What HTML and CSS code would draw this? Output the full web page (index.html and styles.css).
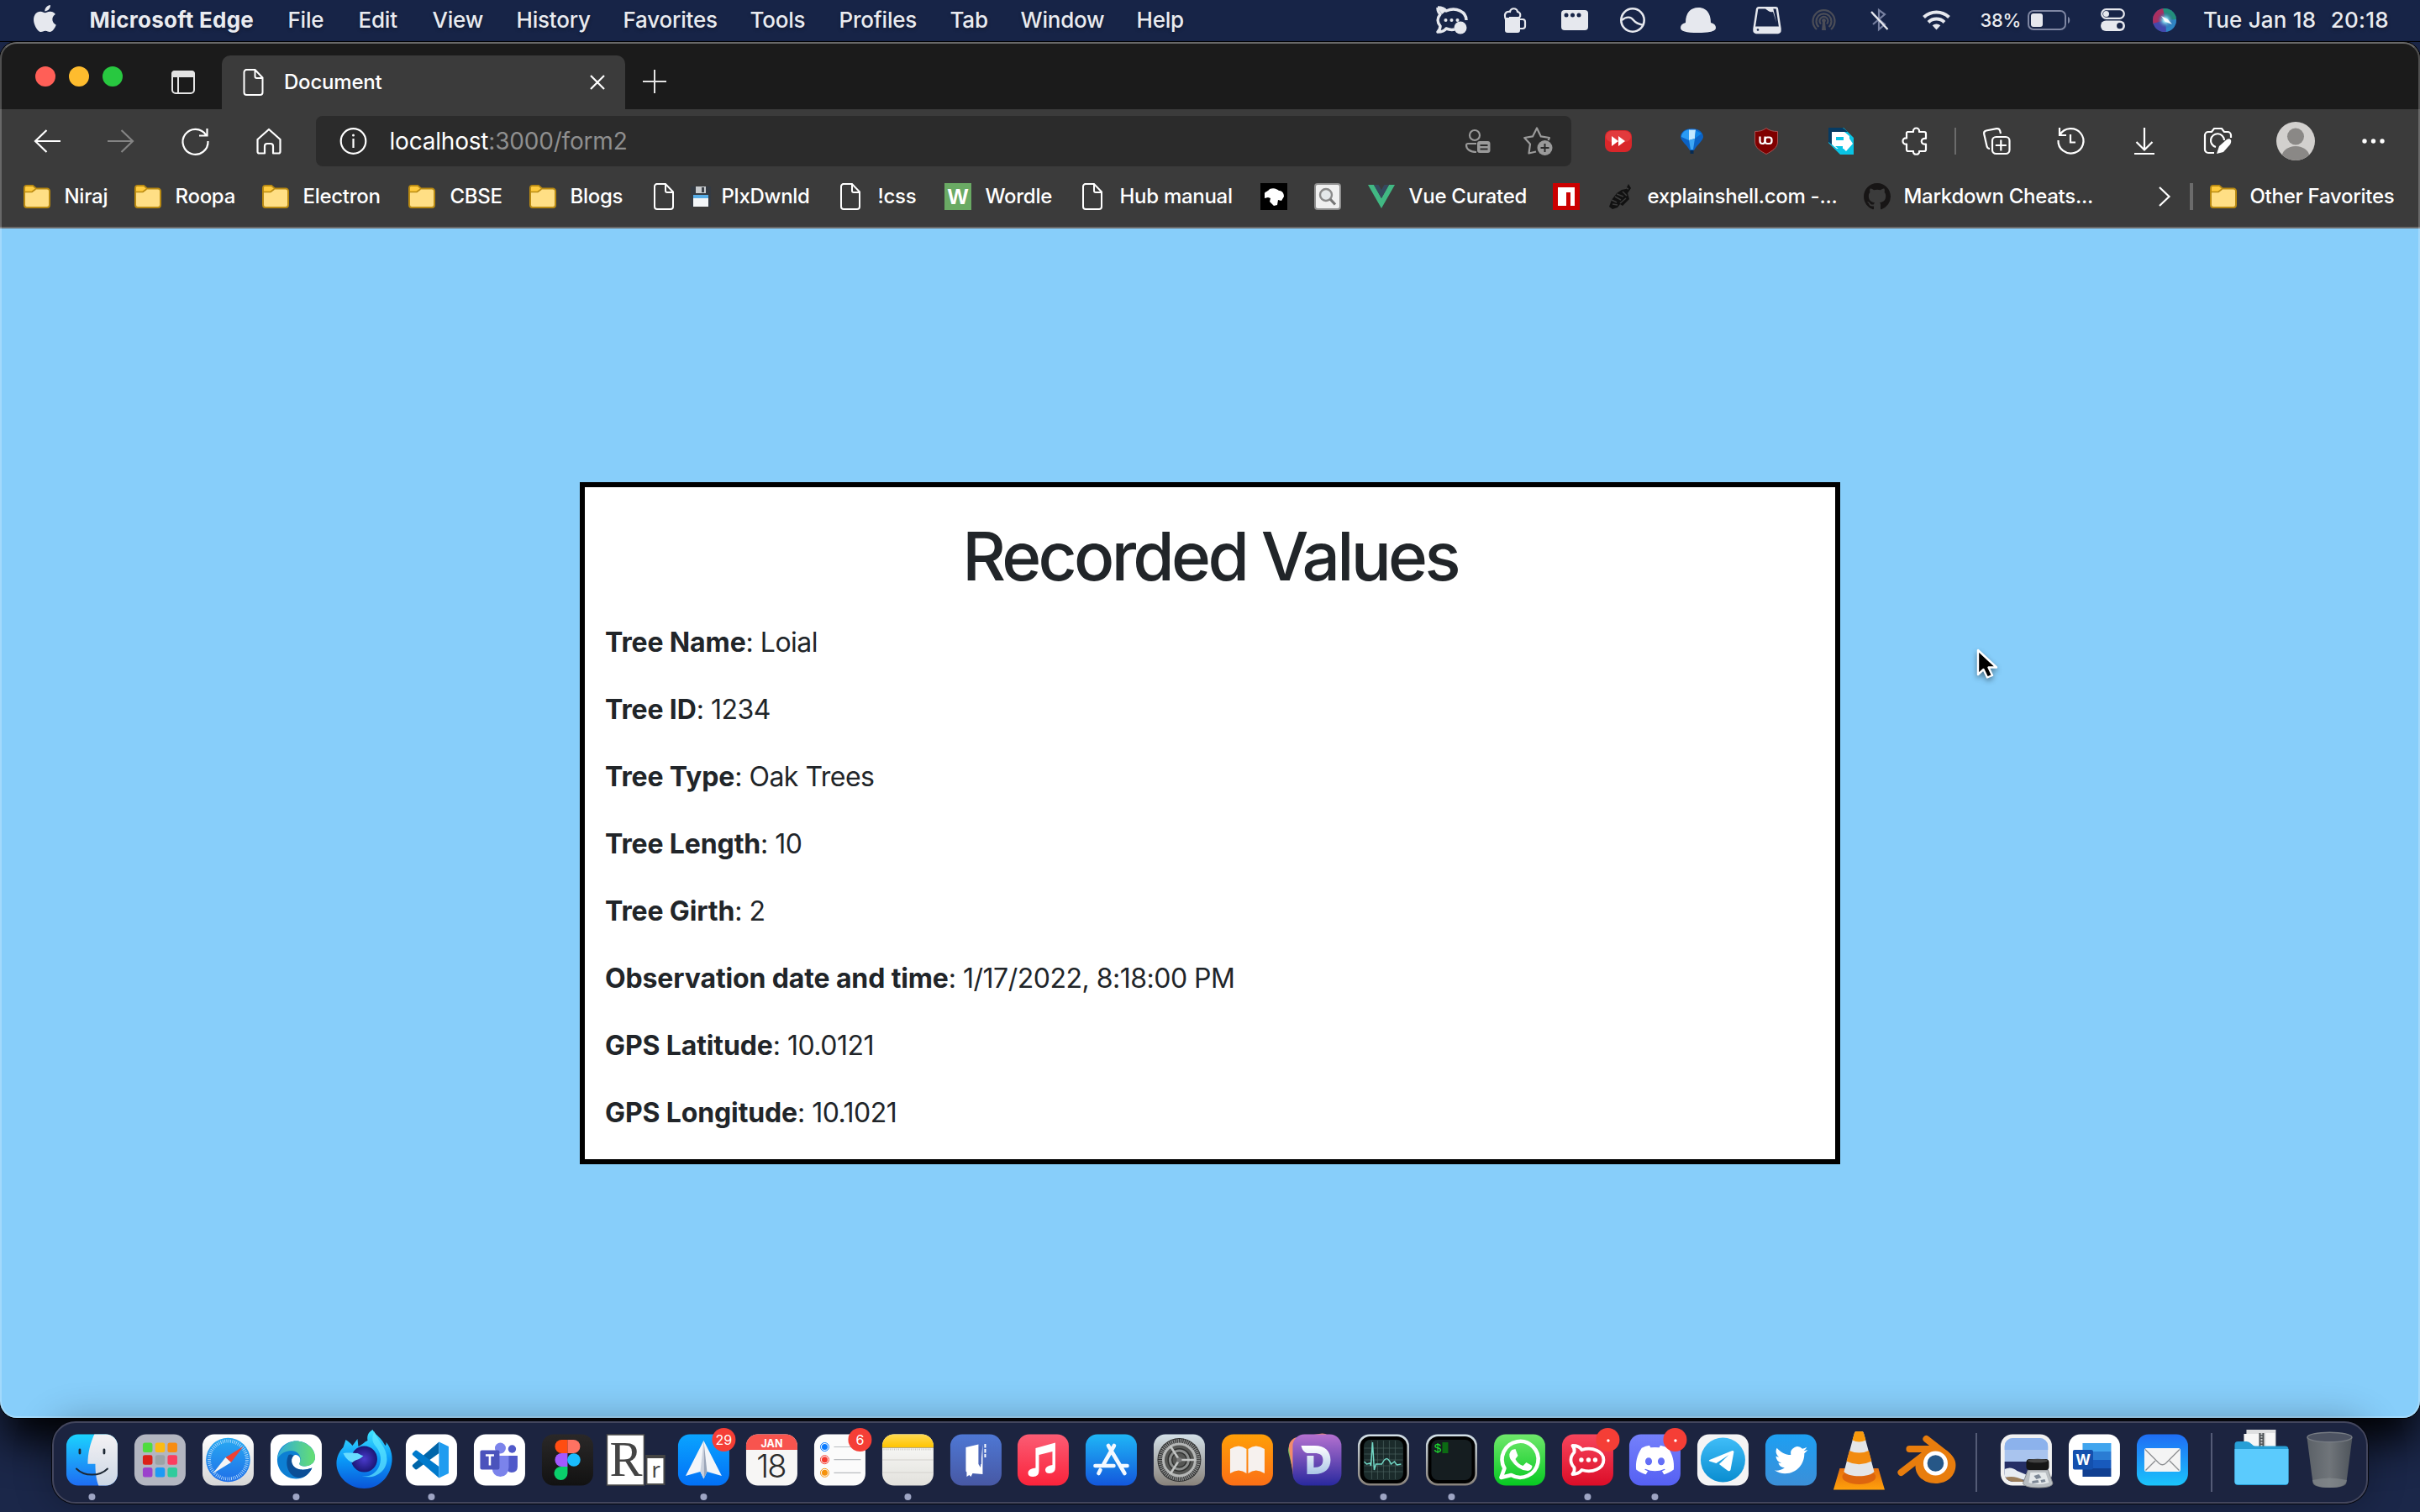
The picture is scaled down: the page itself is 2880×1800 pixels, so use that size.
FILE: index.html
```html
<!DOCTYPE html>
<html lang="en">
<head>
<meta charset="utf-8">
<title>Document</title>
<link rel="stylesheet" href="styles.css">
</head>
<body>
<svg class="defs" width="0" height="0">
  <defs>
    <symbol id="folder" viewBox="0 0 32 28"><path d="M1 4a3 3 0 0 1 3-3h7l4 3.500h13a3 3 0 0 1 3 3V24a3 3 0 0 1-3 3H4a3 3 0 0 1-3-3z" fill="#ffdf85" stroke="#b98a12" stroke-width="2"/><path d="M2 4a2 2 0 0 1 2-2h6.700l3 3-3 3H2z" fill="#ffcb3d"/><path d="M1.500 8.500H10L14.500 5" fill="none" stroke="#b98a12" stroke-width="1.600"/></symbol>
    <symbol id="page" viewBox="0 0 24 32"><path d="M4.500 1H14l9 9.500V28a3 3 0 0 1-3 3H4a3 3 0 0 1-3-3V4a3 3 0 0 1 3.500-3zM14 1v8a2 2 0 0 0 2 2h7" fill="none" stroke="#fff" stroke-width="2"/></symbol>
    <linearGradient id="gFinder" x2="0" y2="1"><stop stop-color="#1bd3fe"/><stop offset="1" stop-color="#1e6cf3"/></linearGradient>
    <linearGradient id="gLight" x2="0" y2="1"><stop stop-color="#fff"/><stop offset="1" stop-color="#d6d6d6"/></linearGradient>
    <linearGradient id="gFace" x2="0" y2="1"><stop stop-color="#f4f2f4"/><stop offset="1" stop-color="#ccd7e5"/></linearGradient>
    <linearGradient id="gSky" x2="0" y2="1"><stop stop-color="#28aaf2"/><stop offset="1" stop-color="#1f6fe8"/></linearGradient>
    <linearGradient id="gEdge" x2="1" y2="0"><stop stop-color="#2fa9dc"/><stop offset="1" stop-color="#66e070"/></linearGradient>
    <linearGradient id="gFox" x2="0" y2="1"><stop stop-color="#3fe6ff"/><stop offset=".5" stop-color="#0a9af8"/><stop offset="1" stop-color="#0a55d8"/></linearGradient>
    <linearGradient id="gDark" x2="0" y2="1"><stop stop-color="#2a2828"/><stop offset="1" stop-color="#121212"/></linearGradient>
    <linearGradient id="gSpark" x2="0" y2="1"><stop stop-color="#0aa4ff"/><stop offset="1" stop-color="#0270f6"/></linearGradient>
    <linearGradient id="gNotes" x2="0" y2="1"><stop stop-color="#ffdb55"/><stop offset="1" stop-color="#ffc400"/></linearGradient>
    <linearGradient id="gPaper" x2="0" y2="1"><stop stop-color="#fdfdfc"/><stop offset="1" stop-color="#e2e1dc"/></linearGradient>
    <linearGradient id="gBook" x2="0" y2="1"><stop stop-color="#4e77d4"/><stop offset="1" stop-color="#4758a4"/></linearGradient>
    <linearGradient id="gMusic" x2="0" y2="1"><stop stop-color="#fb5c74"/><stop offset="1" stop-color="#fa233b"/></linearGradient>
    <linearGradient id="gStore" x2="0" y2="1"><stop stop-color="#1fb6f6"/><stop offset="1" stop-color="#1357dc"/></linearGradient>
    <linearGradient id="gMetal" x2="0" y2="1"><stop stop-color="#d3e0e8"/><stop offset="1" stop-color="#88827b"/></linearGradient>
    <linearGradient id="gOrange" x2="0" y2="1"><stop stop-color="#ff9f07"/><stop offset="1" stop-color="#fb6f16"/></linearGradient>
    <linearGradient id="gDash" x2="0" y2="1"><stop stop-color="#b571d0"/><stop offset="1" stop-color="#29299e"/></linearGradient>
    <linearGradient id="gDee" x2="0" y2="1"><stop stop-color="#fff"/><stop offset="1" stop-color="#aac6e6"/></linearGradient>
    <linearGradient id="gGreen" x2="0" y2="1"><stop stop-color="#6fe86b"/><stop offset="1" stop-color="#07c922"/></linearGradient>
    <linearGradient id="gRed" x2="0" y2="1"><stop stop-color="#f7455c"/><stop offset="1" stop-color="#db0d28"/></linearGradient>
    <linearGradient id="gBlurple" x2="0" y2="1"><stop stop-color="#7480fb"/><stop offset="1" stop-color="#5560f3"/></linearGradient>
    <linearGradient id="gTele" x2="0" y2="1"><stop stop-color="#3fbdf8"/><stop offset="1" stop-color="#0a8dd0"/></linearGradient>
    <linearGradient id="gBird" x2="0" y2="1"><stop stop-color="#1d9ff2"/><stop offset="1" stop-color="#3b8fd8"/></linearGradient>
    <linearGradient id="gMail" x2="0" y2="1"><stop stop-color="#1f6df5"/><stop offset="1" stop-color="#1bc4fb"/></linearGradient>
    <linearGradient id="gTrash"><stop stop-color="#5b6167"/><stop offset=".5" stop-color="#70757a"/><stop offset="1" stop-color="#4e545b"/></linearGradient>
    <linearGradient id="gBase" x2="0" y2="1"><stop stop-color="#e8700e"/><stop offset="1" stop-color="#ffa10b"/></linearGradient>
    <radialGradient id="gSiri"><stop stop-color="#fff"/><stop offset=".3" stop-color="#7fd0e8"/><stop offset="1" stop-color="#2b4a9c" stop-opacity="0"/></radialGradient>
    <radialGradient id="gOrb"><stop stop-color="#4a3acb"/><stop offset="1" stop-color="#1b1675"/></radialGradient>
  </defs>
</svg>

<header class="menubar">
  <svg class="lift apple" width="26" height="32" viewBox="2.200 0 19 24" preserveAspectRatio="none"><path fill="#e6e8ee" d="M12.152 6.896c-.948 0-2.415-1.078-3.960-1.040-2.040.027-3.910 1.183-4.961 3.014-2.117 3.675-.546 9.103 1.519 12.090 1.013 1.454 2.208 3.090 3.792 3.039 1.520-.065 2.090-.987 3.935-.987 1.831 0 2.350.987 3.960.948 1.637-.026 2.676-1.480 3.676-2.948 1.156-1.688 1.636-3.325 1.662-3.415-.039-.013-3.182-1.221-3.220-4.857-.026-3.040 2.480-4.494 2.597-4.559-1.429-2.090-3.623-2.324-4.390-2.376-2-.156-3.675 1.090-4.610 1.090zM15.530 3.830c.843-1.012 1.400-2.427 1.245-3.830-1.207.052-2.662.805-3.532 1.818-.78.896-1.454 2.338-1.273 3.714 1.338.104 2.715-.688 3.559-1.701"/></svg>
  <span class="app-name">Microsoft Edge</span>
  <span>File</span><span>Edit</span><span>View</span><span>History</span><span>Favorites</span><span>Tools</span><span>Profiles</span><span>Tab</span><span>Window</span><span>Help</span>
  <svg width="38" height="34" viewBox="0 0 38 34"><path d="M2 2c4 0 8 1 10 4 12-5 24 1 24 11M2 2c0 4 1 6 3 8-4 5-4 9 0 14 0 3-1 5-3 7 4 0 8-1 10-4 4 1.500 8 1.500 10 1" fill="none" stroke="#e6e8ee" stroke-width="3.500" stroke-linejoin="round"/><path d="M2 2c4 0 8 1 10 4l-5 4z" fill="#e6e8ee"/><circle cx="11.500" cy="17" r="2" fill="#e6e8ee"/><circle cx="18.500" cy="17" r="2" fill="#e6e8ee"/><circle cx="25.500" cy="17" r="2" fill="#e6e8ee"/><circle cx="29" cy="26" r="7.500" fill="#e6e8ee"/></svg>
  <svg width="26" height="30" viewBox="0 0 26 30"><path d="M1 12h18v15a3 3 0 0 1-3 3H4a3 3 0 0 1-3-3z" fill="#e6e8ee"/><path d="M19 14h3a3 3 0 0 1 3 3v5a3 3 0 0 1-3 3h-3M2 14C-1 7 3 4 7 5c1-5 8-5 9 0 4 1 4 5 2 7H6" fill="none" stroke="#e6e8ee" stroke-width="2.200"/></svg>
  <svg width="32" height="24" viewBox="0 0 32 24"><rect width="32" height="24" rx="4" fill="#e6e8ee"/><g fill="#172447"><circle cx="6" cy="6" r="2.500"/><circle cx="13.500" cy="6" r="2.500"/><circle cx="21" cy="6" r="2.500"/></g></svg>
  <svg width="30" height="30" viewBox="0 0 30 30"><circle cx="15" cy="15" r="13.700" fill="none" stroke="#e6e8ee" stroke-width="2.600"/><path d="M2 15c6-5 11-4 14 0s7 5 12 6" fill="none" stroke="#e6e8ee" stroke-width="2.400"/></svg>
  <svg width="42" height="30" viewBox="0 0 42 30"><path d="M6 18C6 6 12 0 21 0s15 6 15 18c4 1 6 3 6 6 0 4-6 6-21 6S0 28 0 24c0-3 2-5 6-6z" fill="#e6e8ee"/></svg>
  <svg width="34" height="32" viewBox="0 0 34 32"><path d="M7 1.300h20a2 2 0 0 1 2 2L32.500 26v2.500a2.500 2.500 0 0 1-2.500 2.500H4a2.500 2.500 0 0 1-2.500-2.500V26L5 3.300a2 2 0 0 1 2-2z" fill="none" stroke="#e6e8ee" stroke-width="2.400"/><path d="M1.500 23.500h31V29a2 2 0 0 1-2 2h-27a2 2 0 0 1-2-2zM14 1h10l4 18-4-13c-3 1-7-1-10-5z" fill="#e6e8ee"/><circle cx="6" cy="27.500" r="1.300" fill="#172447"/></svg>
  <svg width="29" height="27" viewBox="0 0 29 27"><g fill="none" stroke="#4b4d57" stroke-width="2.200"><path d="M6 25A13 13 0 1 1 23 25"/><path d="M8.500 22a9 9 0 1 1 12 0"/><path d="M11 18.500a5 5 0 1 1 7 0"/></g><circle cx="14.500" cy="14.500" r="2.400" fill="#4b4d57"/><path d="M13 16h3l1 10h-5z" fill="#4b4d57"/></svg>
  <svg width="22" height="27" viewBox="0 0 22 27"><path d="M3 7l14 12-7 6V2l7 5L3 19" fill="none" stroke="#7780a0" stroke-width="2.200"/><path d="M1 4l19.500 21" stroke="#e6e8ee" stroke-width="2.400"/></svg>
  <svg class="wifi" width="33" height="25" viewBox="0 0 33 25"><g fill="none" stroke="#e6e8ee" stroke-width="4"><path d="M1.500 9.500a21.500 21.500 0 0 1 30 0"/><path d="M7 15.500a13.500 13.500 0 0 1 19 0"/></g><path d="M16.500 24.500l-4.800-5.200a7 7 0 0 1 9.600 0z" fill="#e6e8ee"/></svg>
  <span class="percent">38%</span>
  <svg width="52" height="24" viewBox="0 0 52 24"><rect x="1" y="1" width="44" height="22" rx="6" fill="none" stroke="#7f87a3" stroke-width="2"/><rect x="4" y="4" width="14" height="16" rx="3" fill="#e6e8ee"/><path d="M48 8c3 1 3 7 0 8z" fill="#7f87a3"/></svg>
  <svg width="29" height="27" viewBox="0 0 29 27"><rect x="1.200" y="1.200" width="26.600" height="10.600" rx="5.300" fill="none" stroke="#e6e8ee" stroke-width="2.200"/><circle cx="6.500" cy="6.500" r="3.500" fill="#e6e8ee"/><rect y="14.500" width="29" height="12.500" rx="6.200" fill="#e6e8ee"/><circle cx="22.700" cy="20.700" r="3.600" fill="#172447"/></svg>
  <svg width="28" height="28" viewBox="0 0 28 28"><clipPath id="orb"><circle cx="14" cy="14" r="14"/></clipPath><g clip-path="url(#orb)"><rect width="28" height="28" fill="#2a4f9e"/><path d="M0 0H14L15 14 0 20z" fill="#a92f60"/><path d="M12 0H28V14L15 14z" fill="#238f7a"/><path d="M28 13V28H14l1-14z" fill="#2f86c4"/><path d="M0 18L15 14 16 28H0z" fill="#4448ac"/></g><circle cx="15" cy="14" r="10" fill="url(#gSiri)"/><path d="M10 9l8 4 5 6-8-3z" fill="#fff" opacity=".9"/></svg>
  <span class="clock"><span>Tue Jan 18</span><span>20:18</span></span>
</header>

<section class="window">
  <div class="tabstrip">
    <div class="lights"><i class="red"></i><i class="amber"></i><i class="green"></i></div>
    <svg class="tab-actions" width="28" height="28" viewBox="0 0 28 28"><rect x="1" y="1" width="26" height="26" rx="4" fill="none" stroke="#e4e4e4" stroke-width="2"/><path d="M0 8V4a4 4 0 0 1 4-4h20a4 4 0 0 1 4 4v4z" fill="#e4e4e4"/><path d="M8 8v19" stroke="#e4e4e4" stroke-width="2"/></svg>
    <div class="tab">
      <svg width="25" height="32"><use href="#page"/></svg>
      <span>Document</span>
      <svg width="18" height="18" viewBox="0 0 18 18"><path d="M1 1l16 16M17 1L1 17" stroke="#fff" stroke-width="2.200"/></svg>
    </div>
    <svg class="new-tab" width="28" height="28" viewBox="0 0 28 28"><path d="M14 0v28M0 14h28" stroke="#e4e4e4" stroke-width="2"/></svg>
  </div>

  <div class="toolbar">
    <svg width="32" height="28" viewBox="0 0 32 28"><path d="M15.500 1L2 14l13.500 13M2 14h30" fill="none" stroke="#fff" stroke-width="2.200"/></svg>
    <svg width="32" height="28" viewBox="0 0 32 28"><path d="M16.500 1L30 14 16.500 27M30 14H0" fill="none" stroke="#848484" stroke-width="2.200"/></svg>
    <svg width="33" height="32" viewBox="0 0 33 32"><path d="M29 8.500A15 15 0 1 0 31.500 16M30.500 1v8.500H21" fill="none" stroke="#fff" stroke-width="2.200"/></svg>
    <svg width="30" height="32" viewBox="0 0 30 32"><path d="M15 2l13.500 12v14.500a2 2 0 0 1-2 2H20V22a3 3 0 0 0-3-3h-4a3 3 0 0 0-3 3v8.500H3.500a2 2 0 0 1-2-2V14z" fill="none" stroke="#fff" stroke-width="2.200" stroke-linejoin="round"/></svg>
    <div class="address">
      <svg width="33" height="32" viewBox="0 0 33 32"><circle cx="16.500" cy="16" r="14.800" fill="none" stroke="#fff" stroke-width="2.200"/><path d="M16.500 13v11" stroke="#fff" stroke-width="2.200"/><circle cx="16.500" cy="9" r="1.500" fill="#fff"/></svg>
      <span class="url"><b>localhost</b>:3000/form2</span>
      <svg width="32" height="29" viewBox="0 0 32 29"><g fill="none" stroke="#9a9a9a" stroke-width="2.200"><circle cx="11" cy="7" r="6"/><path d="M13 17H3a2 2 0 0 0-2 2c0 4 4 8 12 8"/></g><rect x="14" y="14" width="15.500" height="14" rx="3" fill="#9a9a9a"/><path d="M17.500 19h9M17.500 23.500h9" stroke="#2b2b2b" stroke-width="2"/></svg>
      <svg width="35" height="34" viewBox="0 0 35 34"><path d="M15 29.500l-8.500 2L8 20.500 1.200 13l9.800-1.600L16 1.500l4.800 9.900L31 13l-1.500 3" fill="none" stroke="#9a9a9a" stroke-width="2.200" stroke-linejoin="round"/><circle cx="25.500" cy="25" r="9" fill="#9a9a9a"/><path d="M25.500 20v10M20.500 25h10" stroke="#2b2b2b" stroke-width="2"/></svg>
    </div>
    <svg width="32" height="26" viewBox="0 0 32 26"><rect width="32" height="26" rx="8" fill="#d9262a"/><rect x="1" y="1" width="30" height="13" rx="7" fill="#e23a3d"/><path d="M8 7l8 6-8 6zM16 7l8 6-8 6z" fill="#fff"/></svg>
    <svg width="27" height="30" viewBox="0 0 27 30"><path d="M13.500 0C21 0 27 4 27 10c0 4-7 9-11 16h-5C7 19 0 14 0 10 0 4 6 0 13.500 0z" fill="#0b62c4"/><path d="M11 1C4 2 1 6 1 10l9 4z" fill="#2a9bf4"/><path d="M10 1.500h8L17 12l-7 2z" fill="#c3e8ff"/><path d="M10 14l7-2-2 13h-3z" fill="#3da6f3"/><path d="M18 2l7 4-8 6z" fill="#0d83e6"/><rect x="11.500" y="26" width="4" height="4" fill="#062b53"/></svg>
    <svg width="28" height="32" viewBox="0 0 28 32"><path d="M14 .5c4 3 8 4 13.500 4V17c0 7-7 11-13.500 14.500C7.500 28 .5 24 .5 17V4.500C6 4.500 10 3.500 14 .5z" fill="#800000" stroke="#a55353"/><path d="M6.500 10.500V16a3 3 0 0 0 6 0v-5.500" fill="none" stroke="#fff" stroke-width="2.200"/><rect x="12.500" y="11.500" width="8" height="7.500" rx="3" fill="none" stroke="#fff" stroke-width="2.200"/></svg>
    <svg width="30" height="32" viewBox="0 0 30 32"><path d="M0 0h18L30 12v20H14L0 18z" fill="#09c3e4"/><path d="M0 0h17l6 5H5v16L0 17z" fill="#063b63"/><path d="M4 5h15l6 5v3l4 6-8 9-3-3H10L4 20z" fill="#fff"/><path d="M9 11h9v4H9zM8 22h9v4h-4z" fill="#09c3e4"/></svg>
    <svg width="29" height="32" viewBox="0 0 29 32"><path d="M6 5h7c-1-6 8-6 7 0h6a2 2 0 0 1 2 2v6c-7-1.500-7 8 0 6.500V26a2 2 0 0 1-2 2h-6c1 5-8 5-7 0H7a2 2 0 0 1-2-2v-6.500c-6 1-6-8 0-7V6z" fill="none" stroke="#fff" stroke-width="2.200" stroke-linejoin="round"/></svg>
    <i class="divider thin"></i>
    <svg width="33" height="32" viewBox="0 0 33 32"><g fill="none" stroke="#fff" stroke-width="2.200"><rect x="11" y="11" width="20.500" height="20" rx="4.500"/><path d="M21.300 14.500v13M14.800 21h13M8 25c-2 0-3-1-3.500-3L1.200 7.500c-.4-2 .6-3.500 2.500-4L16 1.200c2-.4 3.600.6 4.200 2.500L21 7"/></g></svg>
    <svg width="33" height="32" viewBox="0 0 33 32"><path d="M3.500 8.500A15 14.700 0 1 1 1.500 15M3 0v9h8M16 8v9.500h6" fill="none" stroke="#fff" stroke-width="2.200"/></svg>
    <svg width="24" height="32" viewBox="0 0 24 32"><path d="M12 0v26M2.500 17l9.500 9.500 9.500-9.500M0 31h24" fill="none" stroke="#fff" stroke-width="2.200"/></svg>
    <svg width="33" height="32" viewBox="0 0 33 32"><path d="M12 30H5a4 4 0 0 1-4-4V9a4 4 0 0 1 4-4h4l3-4h9l3 4h4a4 4 0 0 1 4 4v3M14 23a8 8 0 1 1 10-8" fill="none" stroke="#fff" stroke-width="2.200"/><path d="M15 31l3-9 9-8c4-2 7 1 4 6l-8 9z" fill="#fff"/></svg>
    <svg width="46" height="46" viewBox="0 0 46 46"><clipPath id="av"><circle cx="23" cy="23" r="23"/></clipPath><g clip-path="url(#av)"><rect width="46" height="46" fill="#d2d0ce"/><circle cx="23" cy="17.500" r="10" fill="#8a8886"/><ellipse cx="23" cy="42" rx="16.500" ry="13" fill="#8a8886"/></g></svg>
    <svg width="27" height="6" viewBox="0 0 27 6"><g fill="#fff"><circle cx="3" cy="3" r="2.700"/><circle cx="13.500" cy="3" r="2.700"/><circle cx="24" cy="3" r="2.700"/></g></svg>
  </div>

  <nav class="bookmarks">
    <svg width="32" height="28"><use href="#folder"/></svg><span>Niraj</span>
    <svg width="32" height="28"><use href="#folder"/></svg><span>Roopa</span>
    <svg width="32" height="28"><use href="#folder"/></svg><span>Electron</span>
    <svg width="32" height="28"><use href="#folder"/></svg><span>CBSE</span>
    <svg width="32" height="28"><use href="#folder"/></svg><span>Blogs</span>
    <svg width="24" height="32"><use href="#page"/></svg>
    <svg width="24" height="24" viewBox="0 0 24 24"><rect width="24" height="24" rx="1" fill="#343a42"/><rect x="6" y="0" width="12" height="8" fill="#c9cccf"/><rect x="13" y="1" width="3" height="6" fill="#3c4148"/><rect x="3" y="10" width="18" height="14" fill="#f3f6f8"/><rect x="3" y="10" width="18" height="4" fill="#58aee8"/></svg>
    <span>PlxDwnld</span>
    <svg width="24" height="32"><use href="#page"/></svg><span>!css</span>
    <i class="wordle">W</i><span>Wordle</span>
    <svg width="24" height="32"><use href="#page"/></svg><span>Hub manual</span>
    <svg width="32" height="32" viewBox="0 0 32 32"><rect width="32" height="32" fill="#000"/><path d="M5 12c1-2 4-2 6-5 5-2 9 0 11 2 4 0 6 3 6 7l-3 5-4-1-1 6-4 1-5-5 1-4-3-1-4 1z" fill="#fff"/></svg>
    <svg width="32" height="32" viewBox="0 0 32 32"><rect x="1" y="1" width="30" height="30" rx="3" fill="#f0f0f0" stroke="#8f8f8f" stroke-width="2"/><circle cx="14" cy="14" r="7" fill="#e4e8ea" stroke="#8a8a8a" stroke-width="2.400"/><path d="M19 19l6 6.500" stroke="#777" stroke-width="3.200"/></svg>
    <svg width="32" height="28" viewBox="0 0 32 28"><path d="M0 0h7l9 16 9-16h7L16 28z" fill="#41b883"/><path d="M7 0h5.500L16 6l3.500-6H25l-9 16z" fill="#35495e"/></svg>
    <span>Vue Curated</span>
    <svg width="32" height="32" viewBox="0 0 32 32"><rect width="32" height="32" fill="#cb0000"/><path d="M6 5h20v22h-5V11h-5v16H6z" fill="#fff"/></svg>
    <svg width="28" height="32" viewBox="0 0 28 32"><path d="M24 1l3 5-4 6 2 7-8 8-3-2-3 4-6 2-4-3 3-8 6-8 6-4 5-1z" fill="#111"/><path d="M4 20l6 3M8 16l7 4M10 13l8 3M5 25l6 1M17 10l5 5M14 24l7-6M20 5l4 2" stroke="#3b3b3b" stroke-width="1.500"/></svg>
    <span>explainshell.com -...</span>
    <svg width="32" height="32" viewBox="0 0 16 16"><path fill="#171515" d="M8 0C3.580 0 0 3.580 0 8c0 3.540 2.290 6.530 5.470 7.590.4.070.55-.17.55-.38 0-.19-.01-.82-.01-1.490-2.010.37-2.530-.49-2.690-.94-.09-.23-.48-.94-.82-1.130-.28-.15-.68-.52-.01-.53.63-.01 1.080.58 1.230.82.72 1.210 1.870.87 2.330.66.07-.52.28-.87.51-1.070-1.780-.2-3.640-.89-3.640-3.950 0-.87.31-1.590.82-2.150-.08-.2-.36-1.020.08-2.120 0 0 .67-.21 2.200.82.64-.18 1.320-.27 2-.27s1.360.09 2 .27c1.530-1.040 2.200-.82 2.200-.82.44 1.100.16 1.920.08 2.120.51.56.82 1.270.82 2.150 0 3.070-1.870 3.750-3.650 3.950.29.25.54.73.54 1.480 0 1.070-.01 1.930-.01 2.200 0 .21.15.46.55.38A8.010 8.010 0 0 0 16 8c0-4.420-3.580-8-8-8z"/></svg>
    <span>Markdown Cheats...</span>
    <svg width="14" height="24" viewBox="0 0 14 24"><path d="M1 1l11.500 11L1 23" fill="none" stroke="#fff" stroke-width="2.200"/></svg>
    <i class="divider"></i>
    <svg width="32" height="28"><use href="#folder"/></svg><span>Other Favorites</span>
  </nav>

  <main class="page">
    <article class="card">
      <h1>Recorded Values</h1>
      <p><b>Tree Name</b>: Loial</p>
      <p><b>Tree ID</b>: 1234</p>
      <p><b>Tree Type</b>: Oak Trees</p>
      <p><b>Tree Length</b>: 10</p>
      <p><b>Tree Girth</b>: 2</p>
      <p><b>Observation date and time</b>: 1/17/2022, 8:18:00 PM</p>
      <p><b>GPS Latitude</b>: 10.0121</p>
      <p><b>GPS Longitude</b>: 10.1021</p>
    </article>
  </main>
  <svg class="cursor" width="28" height="40" viewBox="0 0 28 40"><path d="M3 2v29l6.500-6 4.500 9.500 6-2.500-4.500-9.500H25z" fill="#000" stroke="#fff" stroke-width="2.400" stroke-linejoin="round"/></svg>
</section>

<footer class="dock">
  <!-- Finder -->
  <svg class="running" viewBox="-40.450 -44 80.900 94"><clipPath id="tile"><rect x="-30.500" y="-30.500" width="61" height="61" rx="14"/></clipPath><g clip-path="url(#tile)"><rect x="-31" y="-31" width="62" height="62" fill="url(#gFinder)"/><path d="M3-31C-2-20-5-8-5 4.700H4C4 15 5 23 8 31H31V-31z" fill="url(#gFace)"/></g><path d="M-14.500-12v4M14.500-12v4" stroke="#1c2733" stroke-width="2.800" stroke-linecap="round"/><path d="M-18.500 10.500C-9 20 9 20 18.500 10.500" fill="none" stroke="#1c2733" stroke-width="2" stroke-linecap="round"/><circle class="dot" cy="44" r="4"/></svg>
  <!-- Launchpad -->
  <svg viewBox="-40.450 -44 80.900 94"><rect x="-30.500" y="-30.500" width="61" height="61" rx="14" fill="#b3b6c1"/><rect x="-20.500" y="-20.500" width="11.500" height="11.500" rx="2.500" fill="#4fdc3f"/><rect x="-5.700" y="-20.500" width="11.500" height="11.500" rx="2.500" fill="#fbbb14"/><rect x="9" y="-20.500" width="11.500" height="11.500" rx="2.500" fill="#f78c12"/><rect x="-20.500" y="-5.700" width="11.500" height="11.500" rx="2.500" fill="#dc2119"/><rect x="-5.700" y="-5.700" width="11.500" height="11.500" rx="2.500" fill="#9ba3a6"/><rect x="9" y="-5.700" width="11.500" height="11.500" rx="2.500" fill="#fb3d5f"/><rect x="-20.500" y="9" width="11.500" height="11.500" rx="2.500" fill="#9b42cc"/><rect x="-5.700" y="9" width="11.500" height="11.500" rx="2.500" fill="#1d9af5"/><rect x="9" y="9" width="11.500" height="11.500" rx="2.500" fill="#2fcb9c"/></svg>
  <!-- Safari -->
  <svg viewBox="-40.450 -44 80.900 94"><rect x="-30.500" y="-30.500" width="61" height="61" rx="14" fill="url(#gLight)"/><circle r="26.300" fill="url(#gSky)"/><circle r="22.500" fill="none" stroke="#bfe0fb" stroke-width="4" stroke-dasharray=".8 1.550"/><path d="M18-16L3.500 3-3-3z" fill="#ee4134"/><path d="M-18 16L3.500 3-3-3z" fill="#f5f5f5"/></svg>
  <!-- Edge -->
  <svg class="running" viewBox="-40.450 -44 80.900 94"><rect x="-30.500" y="-30.500" width="61" height="61" rx="14" fill="#fff"/><path d="M-22.500 0C-22.500-14-12-22.500 0-22.500S22.500-14 22.500-3C22.500 4 16 7.500 10.500 7.500 6 7.500 3.500 6 4 4 6 1 5-6-1-6-8-4-8 10 5 11.500 10 12 15 11 19 9.500 15 18 8 22.500 0 22.500-13 22.500-22.500 12-22.500 0z" fill="#0d7fd3"/><path d="M-22.500-1C-21-13-11-22.500 0-22.500S22.500-14 22.500-3C22.500 4 16 7.500 10.500 7.500 6 7.500 3.500 6 4 4 5.500 1 6-3 3-7-2-14-17-12-22.500-1z" fill="url(#gEdge)"/><path d="M-9-6c-5 10-1 24 10 27 7 1.500 14-3 18-11.500-4 1.500-9 2.500-14 2C-5 10-8 0-3-5c-2-1.500-4.500-2-6-1z" fill="#0b4f97"/><circle class="dot" cy="44" r="4"/></svg>
  <!-- Firefox Developer Edition -->
  <svg viewBox="-40.450 -44 80.900 94"><path d="M-22-24c3 2 6 4 8 7l6-8 1 9c6-3 8-6 11-7-1-6 1-10 6-13 3 6 9 9 12 14l3 5c2-1 1-3 1-4 5 5 8 15 7 23C31 21 17 34 0 34S-33 21-33 4c0-8 4-15 8-19z" fill="url(#gFox)"/><path d="M12-34c-3 6-3 12 1 17 5 6 9 14 5 24C14 17 5 21-3 19c15 5 30-5 30-20C27-15 17-21 12-34z" fill="#5feaff" opacity=".7"/><circle cx="0" cy="-1" r="15.500" fill="url(#gOrb)"/><path d="M-25-8c7-1 13 0 17 0 3 1 5 3 7 3-4 5-9 4-13 8-4-1-9-6-11-11z" fill="#68dcff"/></svg>
  <!-- VS Code -->
  <svg class="running" viewBox="-40.450 -44 80.900 94"><rect x="-30.500" y="-30.500" width="61" height="61" rx="14" fill="#fff"/><path d="M9-21.500V-8L-17 11q-1.500 1-3-.5l-2-2q-1.500-1.500 0-3z" fill="#0065a9"/><path d="M9 21.500V8L-17-11q-1.500-1-3 .5l-2 2q-1.500 1.500 0 3z" fill="#007acc"/><path d="M9-21.500L20.500-16V16L9 21.500z" fill="#1f9cf0"/><circle class="dot" cy="44" r="4"/></svg>
  <!-- Teams -->
  <svg viewBox="-40.450 -44 80.900 94"><rect x="-30.500" y="-30.500" width="61" height="61" rx="14" fill="#fff"/><circle cx="15" cy="-13" r="4.700" fill="#5059c9"/><path d="M8-5h13.500V8q0 7-7 7-6.500 0-6.500-7z" fill="#5059c9"/><circle cx="1" cy="-14" r="6.500" fill="#7b83eb"/><path d="M-9-5H11V9q-1 11-10 11T-9 9z" fill="#7b83eb"/><rect x="-23" y="-11.500" width="23" height="23" rx="2" fill="#4b53bc"/><path d="M-16.500-5.500h10M-11.500-5.500V6.500" stroke="#fff" stroke-width="2.600"/></svg>
  <!-- Figma -->
  <svg viewBox="-40.450 -44 80.900 94"><rect x="-30.500" y="-30.500" width="61" height="61" rx="14" fill="url(#gDark)"/><path d="M0-24H-7a8 8 0 0 0 0 16H0z" fill="#ff4d12"/><path d="M0-24H7a8 8 0 0 1 0 16H0z" fill="#ff7262"/><path d="M0-8H-7a8 8 0 0 0 0 16H0z" fill="#a259ff"/><circle cx="7.500" r="7.800" fill="#19bcfe"/><path d="M0 8H-7A8 8 0 1 0 0 16z" fill="#0acf6b"/></svg>
  <!-- Font utility -->
  <svg viewBox="-40.450 -44 80.900 94"><rect x="-34" y="-30" width="44" height="60" fill="#fff" stroke="#4b4b4b" stroke-width="1.500"/><text x="-31" y="19" font-family="Liberation Serif, serif" font-size="59" textLength="39" lengthAdjust="spacingAndGlyphs" fill="#444">R</text><rect x="13" y="-5" width="21" height="34" fill="#fff" stroke="#4b4b4b" stroke-width="2"/><rect x="12" y="-6" width="23" height="4" fill="#444"/><text x="19" y="21" font-family="Noto Sans, sans-serif" font-size="25" fill="#444">r</text></svg>
  <!-- Spark -->
  <svg class="running" viewBox="-40.450 -44 80.900 94"><rect x="-30.500" y="-30.500" width="61" height="61" rx="14" fill="url(#gSpark)"/><path d="M0-23L-21.500 19-4 14 0 22.500 4 14l17.500 5z" fill="#f3f5f9"/><path d="M0-23l4 37-4 8.500z" fill="#9aa5b8"/><path d="M0-23l-4 37 4 8.500z" fill="#ccd2de"/><circle class="badge" cx="24" cy="-24" r="14"/><text class="badge-text" x="24" y="-18.500">29</text><circle class="dot" cy="44" r="4"/></svg>
  <!-- Calendar -->
  <svg viewBox="-40.450 -44 80.900 94"><rect x="-30.500" y="-30.500" width="61" height="61" rx="14" fill="#f7f6f5"/><path clip-path="url(#tile)" d="M-31-31H31V-12H-31z" fill="#f8544e"/><text x="0" y="-15.500" text-anchor="middle" class="month">JAN</text><text x="-1" y="20.500" text-anchor="middle" class="day">18</text></svg>
  <!-- Reminders -->
  <svg viewBox="-40.450 -44 80.900 94"><rect x="-30.500" y="-30.500" width="61" height="61" rx="14" fill="#fbfbfb"/><path d="M-7-15.500H25M-7-.3H25M-7 15.300H25" stroke="#b9bcc0" stroke-width="1.200"/><g fill="none" stroke-width="1"><circle cx="-18" cy="-15.500" r="5" stroke="#0a7aff"/><circle cx="-18" cy="-.3" r="5" stroke="#f53b30"/><circle cx="-18" cy="15.300" r="5" stroke="#f5920b"/></g><circle cx="-18" cy="-15.500" r="3.500" fill="#0a7aff"/><circle cx="-18" cy="-.3" r="3.500" fill="#f53b30"/><circle cx="-18" cy="15.300" r="3.500" fill="#f5920b"/><circle class="badge" cx="24" cy="-24" r="14"/><text class="badge-text" x="24" y="-18.500">6</text></svg>
  <!-- Notes -->
  <svg class="running" viewBox="-40.450 -44 80.900 94"><rect x="-30.500" y="-30.500" width="61" height="61" rx="14" fill="url(#gPaper)"/><path clip-path="url(#tile)" d="M-31-31H31V-15H-31z" fill="url(#gNotes)"/><path d="M-30.500-14.500h61" stroke="#b5a98a"/><path d="M-29-12.500h58" stroke="#c9c8c4" stroke-width="2" stroke-dasharray="1 1.500"/><path d="M-30.500 0h61M-30.500 15h61" stroke="#d3d2ce"/><circle class="dot" cy="44" r="4"/></svg>
  <!-- Journal -->
  <svg viewBox="-40.450 -44 80.900 94"><rect x="-30.500" y="-30.500" width="61" height="61" rx="14" fill="url(#gBook)"/><path d="M-12-15L3-18.500V5l2.500 4L8-18.500V17L-4 16l-2 4-2-2-3 2v-5.500l-1-1z" fill="#fff"/><path d="M5-16V5" stroke="#4c66b9" stroke-width="3"/><path d="M11-19v16" stroke="#fff" stroke-width="2" stroke-dasharray="4.500 1.500"/></svg>
  <!-- Music -->
  <svg viewBox="-40.450 -44 80.900 94"><rect x="-30.500" y="-30.500" width="61" height="61" rx="14" fill="url(#gMusic)"/><path d="M-9-14L14.500-20.500V9q0 7-7 7-5 0-5-4.500Q3 7 11 6V-10L-5-6V13q0 7-7 7-6 0-6-4.500 0-5 9-6z" fill="#fff"/></svg>
  <!-- App Store -->
  <svg viewBox="-40.450 -44 80.900 94"><rect x="-30.500" y="-30.500" width="61" height="61" rx="14" fill="url(#gStore)"/><g stroke="#f4f9ff" stroke-width="4.600" stroke-linecap="round" fill="none"><path d="M3.500-17L-9 5M-13 12l-2 4M-3.500-17L16 16M-19 7H3M12 7h7"/></g></svg>
  <!-- System Preferences -->
  <svg viewBox="-40.450 -44 80.900 94"><rect x="-30.500" y="-30.500" width="61" height="61" rx="14" fill="url(#gMetal)"/><circle r="26" fill="#2f3030"/><circle r="22.500" fill="none" stroke="#8c8e8e" stroke-width="5" stroke-dasharray="1.300 1"/><circle r="19" fill="#555654" stroke="#b5b7b6" stroke-width="3"/><circle r="11" fill="none" stroke="#303130" stroke-width="6"/><circle r="11" fill="none" stroke="#8c8e8d" stroke-width="3"/><path d="M0 0L-11-17M0 0H20M0 0L-11 17" stroke="#c2c4c3" stroke-width="2.600"/><circle r="3" fill="#777"/></svg>
  <!-- Books -->
  <svg viewBox="-40.450 -44 80.900 94"><rect x="-30.500" y="-30.500" width="61" height="61" rx="14" fill="url(#gOrange)"/><path d="M-20.500-13Q-10-20-1-13V16Q-10 9-20.500 16zM20.500-13Q10-20 1-13V16Q10 9 20.500 16z" fill="#f6f1ee"/></svg>
  <!-- Dash -->
  <svg viewBox="-40.450 -44 80.900 94"><rect x="-29" y="-28" width="50" height="52" rx="12" transform="rotate(-14)" fill="#78bd5c"/><rect x="-29" y="-30" width="52" height="54" rx="12" transform="rotate(-9)" fill="#f28b6c"/><rect x="-27" y="-30.500" width="58" height="61" rx="14" fill="url(#gDash)"/><path d="M-17-17H-1C12-17 18-10 18 0S12 17-2 17H-10V-5h8V9C6 9 9 6 9 0S5-8-1-8h-9q-5-1-7-9z" fill="url(#gDee)"/></svg>
  <!-- Activity Monitor -->
  <svg class="running" viewBox="-40.450 -44 80.900 94"><rect x="-30.500" y="-30.500" width="61" height="61" rx="14" fill="url(#gMetal)"/><rect x="-28" y="-28" width="56" height="56" rx="12" fill="#000"/><rect x="-23.500" y="-24" width="47" height="48" rx="8" fill="#1b2b2b"/><path d="M-14-23v46M-7-23v46M0-23v46M7-23v46M14-23v46M-23-14h46M-23-7h46M-23 0h46M-23 7h46M-23 14h46" stroke="#49605d" stroke-width=".7"/><path d="M-23 2l3 3 4-1 1 3 2-28L-11 12l2-7 7 0c4-8 7-9 11 0l4-3 3 4 5-1" fill="none" stroke="#72d8c6" stroke-width="1.500"/><circle class="dot" cy="44" r="4"/></svg>
  <!-- Terminal -->
  <svg class="running" viewBox="-40.450 -44 80.900 94"><rect x="-30.500" y="-30.500" width="61" height="61" rx="14" fill="url(#gMetal)"/><rect x="-28" y="-28" width="56" height="56" rx="12" fill="#000"/><rect x="-24" y="-24" width="48" height="48" rx="8" fill="#151d20"/><text x="-21" y="-9" class="prompt">$</text><rect x="-11" y="-21" width="7" height="13" fill="#0c6b13"/><circle class="dot" cy="44" r="4"/></svg>
  <!-- WhatsApp -->
  <svg viewBox="-40.450 -44 80.900 94"><rect x="-30.500" y="-30.500" width="61" height="61" rx="14" fill="url(#gGreen)"/><path d="M-18 10A21.500 21.500 0 1 1-10 18L-22 21z" fill="none" stroke="#fff" stroke-width="4.600" stroke-linejoin="round"/><path d="M-9-12l4-1 3 8-3 4q3 6 9 8l4-4 7 4q0 5-5 6Q-2 13-11-1q-3-7 2-11z" fill="#fff"/></svg>
  <!-- Rocket.Chat -->
  <svg class="running" viewBox="-40.450 -44 80.900 94"><rect x="-30.500" y="-30.500" width="61" height="61" rx="14" fill="url(#gRed)"/><path d="M-18-17q8 0 11 5C6-16 19-10 19 0S6 16-7 12q-4 5-11 5 3-4 2-8-4-4-4-9t4-9q1-4-2-8z" fill="none" stroke="#fff" stroke-width="3.800" stroke-linejoin="round"/><circle cx="-7.500" r="2.700" fill="#fff"/><circle cx="1" r="2.700" fill="#fff"/><circle cx="9" r="2.700" fill="#fff"/><circle class="badge" cx="24" cy="-24" r="14"/><circle cx="24.500" cy="-23" r="1.700" fill="#fff"/><circle class="dot" cy="44" r="4"/></svg>
  <!-- Discord -->
  <svg class="running" viewBox="-40.450 -44 80.900 94"><rect x="-30.500" y="-30.500" width="61" height="61" rx="14" fill="url(#gBlurple)"/><path transform="translate(-22.500 -22.500) scale(1.880)" fill="#fff" d="M20.317 4.370a19.800 19.800 0 0 0-4.885-1.515.074.074 0 0 0-.079.037c-.211.375-.445.865-.608 1.250a18.300 18.300 0 0 0-5.487 0c-.164-.393-.406-.874-.618-1.250a.077.077 0 0 0-.079-.037A19.700 19.700 0 0 0 3.677 4.370a.070.070 0 0 0-.032.028C.533 9.046-.319 13.580.099 18.058a.082.082 0 0 0 .031.056c2.053 1.508 4.041 2.423 5.993 3.029a.078.078 0 0 0 .084-.028c.462-.63.873-1.295 1.226-1.994a.076.076 0 0 0-.042-.106 13 13 0 0 1-1.872-.892.077.077 0 0 1-.008-.128c.126-.094.252-.192.372-.291a.074.074 0 0 1 .078-.011c3.928 1.793 8.180 1.793 12.061 0a.074.074 0 0 1 .079.010c.120.099.246.198.373.292a.077.077 0 0 1-.007.128 12.300 12.300 0 0 1-1.873.891.077.077 0 0 0-.041.107c.360.698.772 1.363 1.225 1.993a.076.076 0 0 0 .084.029c1.961-.607 3.950-1.522 6.002-3.029a.077.077 0 0 0 .031-.055c.500-5.177-.838-9.674-3.549-13.660a.061.061 0 0 0-.031-.029zM8.020 15.331c-1.183 0-2.157-1.086-2.157-2.419s.956-2.419 2.157-2.419c1.211 0 2.176 1.095 2.157 2.419 0 1.333-.956 2.419-2.157 2.419zm7.975 0c-1.183 0-2.157-1.086-2.157-2.419s.955-2.419 2.157-2.419c1.211 0 2.176 1.095 2.157 2.419 0 1.333-.946 2.419-2.157 2.419z"/><circle class="badge" cx="24" cy="-24" r="14"/><circle cx="24.500" cy="-23" r="1.700" fill="#fff"/><circle class="dot" cy="44" r="4"/></svg>
  <!-- Telegram -->
  <svg viewBox="-40.450 -44 80.900 94"><rect x="-30.500" y="-30.500" width="61" height="61" rx="14" fill="#f4f4f5"/><circle r="26.500" fill="url(#gTele)"/><path d="M-16 0L11-11q2-.5 2 1.500L9 12q-1 2-3 1L-2 7l-2.500-2L7-6-8 4l-8-2.500q-1.500-1 0-1.500z" fill="#fff"/></svg>
  <!-- Twitter -->
  <svg viewBox="-40.450 -44 80.900 94"><rect x="-30.500" y="-30.500" width="61" height="61" rx="14" fill="url(#gBird)"/><path transform="translate(-19.500 -19.500) scale(1.640)" fill="#fff" d="M23.953 4.570a10 10 0 0 1-2.825.775 4.958 4.958 0 0 0 2.163-2.723c-.951.555-2.005.959-3.127 1.184a4.920 4.920 0 0 0-8.384 4.482C7.690 8.095 4.067 6.130 1.640 3.162a4.822 4.822 0 0 0-.666 2.475c0 1.710.87 3.213 2.188 4.096a4.904 4.904 0 0 1-2.228-.616v.060a4.923 4.923 0 0 0 3.946 4.827 4.996 4.996 0 0 1-2.212.085 4.936 4.936 0 0 0 4.604 3.417 9.867 9.867 0 0 1-6.102 2.105c-.39 0-.779-.023-1.170-.067a13.995 13.995 0 0 0 7.557 2.209c9.053 0 13.998-7.496 13.998-13.985 0-.21 0-.42-.015-.63A9.935 9.935 0 0 0 24 4.590z"/></svg>
  <!-- VLC -->
  <svg viewBox="-40.450 -44 80.900 94"><path d="M-23 10H23L30.500 35.500H-30.500z" fill="url(#gBase)"/><ellipse cy="20" rx="20" ry="9" fill="#dd650e"/><path d="M-3-34H3q2 0 2.500 2L18 14c-5 7-31 7-36 0L-5.500-32q.5-2 2.500-2z" fill="#e4e5e7"/><path d="M-3-34H3q2 0 2.500 2L8-23.500q-8 4-16 0L-5.500-32q.5-2 2.500-2z" fill="#f99a0c"/><path d="M-11.500-11q11.500 5 23 0L15 1.500Q0 9-15 1.500z" fill="#f28b10"/></svg>
  <!-- Blender -->
  <svg viewBox="-40.450 -44 80.900 94"><path d="M-1-25L22-7M-21-13H5M-31 15L0-9" stroke="#e87d0d" stroke-width="8" stroke-linecap="round"/><path d="M-2-10L5-16 22-12C32-5 34 1 34 6c0 13-10 22-24 22S-14 19-14 7q0-7 12-17z" fill="#e87d0d"/><circle cx="10" cy="4" r="14.500" fill="#fff"/><circle cx="10" cy="4" r="9.800" fill="#265787"/></svg>
  <i class="dock-rule"></i>
  <!-- Preview -->
  <svg viewBox="-40.450 -44 80.900 94"><rect x="-30.500" y="-30.500" width="61" height="61" rx="14" fill="#f1f1f1"/><clipPath id="photo"><rect x="-26" y="-26" width="52" height="52" rx="10"/></clipPath><g clip-path="url(#photo)"><rect x="-26" y="-26" width="52" height="52" fill="#a9c4ee"/><rect x="-26" y="-26" width="52" height="14" fill="#8cb2ec"/><rect x="-26" y="2" width="52" height="24" fill="#252f66"/><path d="M-26 11q8-4 15 2l12 5v6l-27-3z" fill="#e7ecf2"/><path d="M-26 21q12-3 22 3l2 3h-24z" fill="#9b7d5a"/></g><path d="M2 12H26l5.500 16q-1 5-17 5T-4 28z" fill="#b9bec2" stroke="#8b8e90"/><path d="M5 15H23l4 12q-12 4-24 0z" fill="#e4e8ea"/><path d="M9 19l6-2 3 4-6 2zM7 25l7-1 1 3-8 1zM17 24l5-1 1 3-5 1z" fill="#7d8896"/><rect x="0" y="-1" width="27" height="13" rx="4" fill="#161616"/><ellipse cx="13.500" cy="1" rx="12" ry="2.300" fill="#434343"/></svg>
  <!-- Word -->
  <svg viewBox="-40.450 -44 80.900 94"><rect x="-30.500" y="-30.500" width="61" height="61" rx="14" fill="#fff"/><path d="M-14-20H20V-10H-14z" fill="#41a5ee"/><path d="M-14-10H20V0H-14z" fill="#2b7cd3"/><path d="M-14 0H20V10H-14z" fill="#185abd"/><path d="M-14 10H20V20H-14z" fill="#103f91"/><rect x="-25.500" y="-12" width="24" height="23.500" rx="2" fill="#1450ae"/><text x="-13.500" y="6" text-anchor="middle" class="word">W</text></svg>
  <!-- Mail -->
  <svg viewBox="-40.450 -44 80.900 94"><rect x="-30.500" y="-30.500" width="61" height="61" rx="14" fill="url(#gMail)"/><rect x="-21.500" y="-14" width="43" height="28" rx="2.500" fill="#f4f4f4"/><path d="M-20.500-12.500L-4 4q4 3.500 8 0L20.500-12.500M-20 12.500L-8.500 1M20 12.500L8.500 1" fill="none" stroke="#8d8f92" stroke-width="1.300"/></svg>
  <i class="dock-rule"></i>
  <!-- Downloads -->
  <svg viewBox="-40.450 -44 80.900 94"><path d="M-18-36H17V-15H-18z" fill="#dfe0e1"/><path d="M-21-31H-3V-15H-21zM5-32H16V-14H5z" fill="#f7f7f7"/><path d="M0-32V-14" stroke="#4f5457" stroke-width="6"/><path d="M0-32V-14" stroke="#c7cacb" stroke-width="2" stroke-dasharray="2 1.500"/><path d="M-32-18q0-4 4-4h10q3 0 6 3t5 2.500H28q4 0 4 4V26q0 4-4 4H-28q-4 0-4-4z" fill="#279fd6"/><path d="M-32-13H32V26q0 3-3 3H-29q-3 0-3-3z" fill="#5bcbfd"/></svg>
  <!-- Trash -->
  <svg viewBox="-40.450 -44 80.900 94"><path d="M-27-27L-20 27q1 6 20 6t20-6L27-27z" fill="url(#gTrash)"/><path d="M-20.500 24q20-5 41 0-1 9-20.500 9t-20.500-9z" fill="#8b8f93" opacity=".55"/><ellipse cy="-27" rx="26.500" ry="5.800" fill="#4d5362" stroke="#777c83" stroke-width="1.400"/></svg>
</footer>
</body>
</html>
```
FILE: styles.css
```css
* { box-sizing: border-box; }

body {
  margin: 0;
  width: 2880px;
  height: 1800px;
  overflow: hidden;
  display: flex;
  flex-direction: column;
  background: #1b2749;
  font-family: Inter, "Liberation Sans", sans-serif;
}

svg { display: block; overflow: visible; }
.defs { position: absolute; }

/* System menu bar */
.menubar {
  position: relative;
  z-index: 2;
  flex: none;
  height: 50px;
  padding: 0 0 2px 40px;
  display: grid;
  grid-template-columns: 67px 236px 84px 88px 100px 127px 151px 106px 132px 84px 138px 356px 81px 68px 70px 72px 86px 70px 70px 62px 69px 56px 87px 62px 61px 1fr;
  align-items: center;
  background: #172447;
  border-bottom: 1px solid #000;
  color: #e9ebf0;
  font-size: 26px;
  font-weight: 500;
  white-space: nowrap;
}
.menubar span { margin-left: -0.5px; letter-spacing: -0.2px; text-shadow: 0 2px 4px rgba(0, 0, 0, .3); }
.menubar .app-name { font-weight: 700; letter-spacing: 0.25px; }
.menubar .percent { font-size: 22px; letter-spacing: -0.3px; }
.menubar .apple { margin-top: -4px; }
.menubar .clock { display: flex; gap: 18px; }
.menubar .clock span { letter-spacing: 0.2px; }

/* Browser window */
.window {
  position: relative;
  flex: none;
  height: 1638px;
  display: flex;
  flex-direction: column;
  border-radius: 20px;
  background: #3b3b3b;
  box-shadow: 0 0 0 1px #000, 0 34px 50px -6px rgba(0, 0, 0, .95);
}
.window::after {
  content: "";
  position: absolute;
  inset: 0;
  border: 2px solid rgba(255, 255, 255, .23);
  border-top-color: rgba(255, 255, 255, .34);
  border-radius: 20px;
  pointer-events: none;
}

.tabstrip {
  flex: none;
  height: 80px;
  padding-left: 42px;
  display: flex;
  align-items: flex-end;
  background: #1b1b1b;
  border-radius: 20px 20px 0 0;
}
.lights { display: flex; gap: 16px; margin-bottom: 27px; }
.lights i { width: 24px; height: 24px; border-radius: 50%; }
.red { background: #ff5f57; }
.amber { background: #febc2e; }
.green { background: #28c840; }
.tab-actions { margin: 0 0 18px 58px; }
.tab {
  width: 480px;
  height: 64px;
  margin-left: 32px;
  padding: 0 24px 0 25px;
  display: flex;
  align-items: center;
  background: #3b3b3b;
  border-radius: 10px 10px 0 0;
  color: #fff;
  font-size: 24px;
  font-weight: 500;
}
.tab span { flex: 1; margin: -2px 0 0 24px; letter-spacing: -0.2px; }
.new-tab { margin: 0 0 19px 21px; }

.toolbar {
  flex: none;
  height: 76px;
  padding-left: 40px;
  display: grid;
  grid-template-columns: 88px 88px 89px 71px 1534px 90px 88px 88px 88px 62px 34px 88px 92px 83px 86px 102px 1fr;
  align-items: center;
}
.address {
  width: 1494px;
  height: 60px;
  padding: 0 22px 0 28px;
  display: flex;
  align-items: center;
  background: #2b2b2b;
  border-radius: 8px;
}
.url { flex: 1; margin-left: 26.5px; font-size: 28px; letter-spacing: -0.2px; color: #8f8f8f; }
.url b { font-weight: 400; color: #fff; }
.address svg:last-child { margin-left: 37px; }

.divider { width: 4px; height: 32px; background: #6b6b6b; }
.divider.thin { width: 2px; }

.bookmarks {
  flex: none;
  height: 66px;
  padding: 0 0 8px 28px;
  display: grid;
  grid-template-columns: 49px 83px 49px 103px 49px 125px 50px 94px 49px 99px 44px 37px 141px 45px 79px 49px 115px 45px 167px 64px 64px 49px 171px 66px 47px 257px 48px 303px 37px 24px 48px 1fr;
  align-items: center;
  border-bottom: 2px solid #6a6a6a;
  color: #fff;
  font-size: 24px;
  font-weight: 500;
  white-space: nowrap;
}
.bookmarks span { margin: -2px 0 0 -0.5px; letter-spacing: -0.28px; }
.wordle {
  width: 32px;
  height: 32px;
  background: #6aaa64;
  font: 700 26px/32px "Liberation Sans", sans-serif;
  text-align: center;
}

/* Web page */
.page {
  flex: 1;
  display: grid;
  place-items: center;
  background: #87cefa;
  border-radius: 0 0 20px 20px;
}
.card {
  width: 1500px;
  height: 812px;
  padding: 34px 24px 0;
  background: #fff;
  border: 6px solid #000;
  color: #212529;
  font-size: 32px;
}
.card h1 {
  margin: 0 0 31px;
  font-size: 80px;
  font-weight: 500;
  line-height: 96px;
  letter-spacing: -3.7px;
  text-align: center;
}
.card p { margin: 0 0 32px; line-height: 48px; letter-spacing: -0.5px; }
.card b { font-weight: 700; letter-spacing: -0.13px; }

.cursor {
  position: absolute;
  left: 2351px;
  top: 722px;
  filter: drop-shadow(0 3px 3px rgba(0, 0, 0, .4));
}

/* Dock */
.dock {
  position: relative;
  flex: none;
  width: 2756px;
  height: 98px;
  margin: 4px 0 0 62px;
  padding-left: 5px;
  display: flex;
  background: #1c2440;
  border: 2px solid #43465d;
  border-radius: 28px;
  box-shadow: 0 0 0 1px #05070d, 0 0 46px rgba(0, 0, 0, .3);
}
.dock svg { flex: none; width: 80.9px; height: 94px; }
.dock-rule { flex: none; width: 2px; height: 70px; margin: 12px 17.5px 0; background: #545b76; }
.dot { fill: #9ea5c4; }
.badge { fill: #f53e36; }
.badge-text { fill: #fff; font-size: 16px; text-anchor: middle; }
.month { fill: #fff; font-size: 12.5px; font-weight: 700; }
.day { fill: #2b2b2b; font-size: 38px; font-weight: 300; letter-spacing: -2px; }
.prompt { fill: #1fe030; font: 15px "Liberation Mono", monospace; }
.word { fill: #fff; font-size: 17px; font-weight: 700; }
```
